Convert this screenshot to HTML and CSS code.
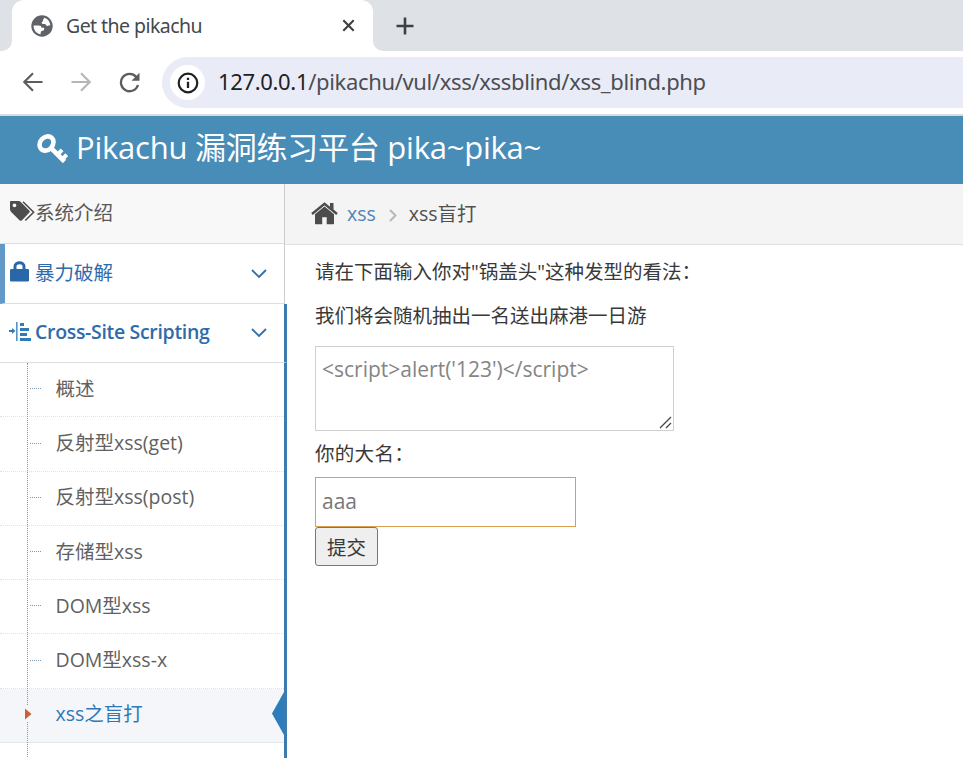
FILE: index.html
```html
<!DOCTYPE html>
<html lang="zh-CN">
<head>
<meta charset="utf-8">
<title>Get the pikachu</title>
<link rel="stylesheet" href="styles.css">
</head>
<body>
<div class="window">
  <div class="tabstrip">
    <div class="strip-left"></div>
    <div class="tab">
      <svg class="globe" width="22" height="22" viewBox="0 0 22 22"><circle cx="11" cy="11" r="10.700" fill="#5f6368"/><path d="M13.200 2.700c3.400.9 5.900 4 6.100 7.600-1.200-.2-2 .8-3.200.6-1.100-.2-1-1.500-2.100-1.800-1.200-.3-2.900.2-3.300-.9-.4-1.200 1.400-1.400 1.300-2.700-.1-1.200 1-1.500 1.200-2.800zM2.600 10.500h4.900c1.800 0 3 .9 3.100 2.300h2c.9.6.7 2-.1 2.600-.9.7-2.300.3-2.700 1.500l-.2 2.300C5.600 18.800 2.400 15 2.600 10.500z" fill="#fff"/></svg>
      <span class="tab-title">Get the pikachu</span>
      <svg class="close" width="13" height="13" viewBox="0 0 13 13"><path d="M1.300 1.300l10.400 10.400M11.700 1.300L1.300 11.700" stroke="#3c4043" stroke-width="2.100"/></svg>
    </div>
    <div class="strip-right">
      <svg width="18" height="18" viewBox="0 0 18 18"><path d="M9 .5v17M.5 9h17" stroke="#3c4043" stroke-width="2.600"/></svg>
    </div>
  </div>
  <div class="toolbar">
    <svg class="nav back" width="20" height="20" viewBox="0 0 20 20"><path d="M19.500 10H1.500M10 1.300L1.300 10l8.700 8.700" fill="none" stroke="#5a5d61" stroke-width="2.100"/></svg>
    <svg class="nav fwd" width="20" height="20" viewBox="0 0 20 20"><path d="M.5 10h18M10 1.300l8.700 8.700-8.700 8.700" fill="none" stroke="#b4b6b9" stroke-width="2.100"/></svg>
    <svg class="nav reload" width="21" height="21" viewBox="0 0 21 21"><path d="M17.300 4.900A8.700 8.700 0 1 0 19 13" fill="none" stroke="#5a5d61" stroke-width="2.300"/><path d="M20.500.8v8h-8z" fill="#5a5d61"/></svg>
    <div class="omnibox">
      <span class="info"><svg width="22" height="22" viewBox="0 0 22 22"><circle cx="11" cy="11" r="9.300" fill="none" stroke="#1f2023" stroke-width="2.200"/><path d="M11 9.700v6.200M11 5.700v2.300" stroke="#1f2023" stroke-width="2.300"/></svg></span>
      <span class="url"><b>127.0.0.1</b>/pikachu/vul/xss/xssblind/xss_blind.php</span>
    </div>
  </div>
  <header class="navbar">
    <svg class="key" width="31" height="30" viewBox="0 0 31 30"><g fill="none" stroke="#fff"><ellipse cx="9.500" cy="9.500" rx="6.300" ry="7.700" transform="rotate(42 9.500 9.500)" stroke-width="4.600"/><path d="M13.500 13.500l14 14" stroke-width="4.600"/><path d="M20.500 20.500l4.600-4.600M25 25.500l4.800-4.800" stroke-width="4"/></g></svg>
    <h1>Pikachu 漏洞练习平台 pika~pika~</h1>
  </header>
  <div class="body">
    <nav class="sidebar">
      <a class="row intro"><svg class="ic-tags" width="26" height="21" viewBox="0 0 26 21"><path fill="#4d4d4d" fill-rule="evenodd" d="M1 0h7.500c1 0 1.800.5 2.500 1.200l8.200 8.300c.8.800.8 1.500 0 2.300L12 19.200c-.8.800-1.700.8-2.500 0L1.200 11C.5 10.300 0 9.500 0 8.500V1c0-.6.400-1 1-1zm3.500 2.400a1.900 1.900 0 1 0 0 3.800 1.900 1.900 0 0 0 0-3.800z"/><path d="M13 .8l10.600 10.400-8.300 8.300" fill="none" stroke="#4d4d4d" stroke-width="1.600"/></svg><span>系统介绍</span></a>
      <a class="row brute"><svg class="ic-lock" width="19" height="21" viewBox="0 0 19 21"><path d="M5 10V5.500C5 .5 14 .5 14 5.500V10" fill="none" stroke="#2a67a9" stroke-width="3"/><rect y="8" width="19" height="12.500" rx="1.300" fill="#2a67a9"/></svg><span>暴力破解</span><svg class="chev" width="16" height="10" viewBox="0 0 16 10"><path d="M1 1l7 7 7-7" fill="none" stroke="#3270ad" stroke-width="1.900"/></svg></a>
      <a class="row cross"><svg class="ic-indent" width="23" height="20" viewBox="0 0 23 20"><g fill="#2d7bbb"><path d="M0 7.900h3V6l3.500 2.900L3 11.700V9.900H0zM7.200 0h1.300v19H7.200zM11 1h4v3h-4zM11 6h9v3h-9zM11 11h7v3h-7zM11 16h11v3H11z"/></g></svg><span>Cross-Site Scripting</span><svg class="chev" width="16" height="10" viewBox="0 0 16 10"><path d="M1 1l7 7 7-7" fill="none" stroke="#3270ad" stroke-width="1.900"/></svg></a>
      <ul class="submenu">
        <li><span>概述</span></li>
        <li><span>反射型xss(get)</span></li>
        <li><span>反射型xss(post)</span></li>
        <li><span>存储型xss</span></li>
        <li><span>DOM型xss</span></li>
        <li><span>DOM型xss-x</span></li>
        <li class="active"><span>xss之盲打</span>
          <svg class="caret" width="9" height="16" viewBox="0 0 9 16"><path fill="#f4f6fa" d="M0 0h9v16H0z"/><path d="M1 2.500L7.500 8 1 13.500z" fill="#c86139"/></svg>
          <svg class="notch" width="12" height="43" viewBox="0 0 12 43"><path d="M12 0v43L0 21.500z" fill="#2b7dbc"/></svg>
        </li>
        <li class="next"></li>
      </ul>
    </nav>
    <main>
      <div class="crumbs">
        <svg class="home" width="27" height="23" viewBox="0 0 27 23"><path d="M1 12L13.500 1.700 26 12" fill="none" stroke="#4c4c4c" stroke-width="2.400"/><path d="M19 1h3.500v7L19 5zM4 12.300l9.500-7.800 9.500 7.800v9c0 .600-.4 1-1 1h-6.300v-7h-4.500v7H5c-.6 0-1-.4-1-1z" fill="#4c4c4c"/></svg>
        <a>xss</a>
        <svg class="sep" width="8" height="13" viewBox="0 0 8 13"><path d="M1 1l5.500 5.500L1 12" fill="none" stroke="#b2b6bf" stroke-width="1.900"/></svg>
        <span class="current">xss盲打</span>
      </div>
      <div class="content">
        <p class="q1">请在下面输入你对"锅盖头"这种发型的看法：</p>
        <p class="q2">我们将会随机抽出一名送出麻港一日游</p>
        <div class="textarea"><span>&lt;script&gt;alert('123')&lt;/script&gt;</span><svg class="grip" width="13" height="13" viewBox="0 0 13 13"><path d="M1 12L12 1M7 12l5-5" stroke="#444" stroke-width="1.300"/></svg></div>
        <p class="label">你的大名：</p>
        <input type="text" value="aaa">
        <button>提交</button>
      </div>
    </main>
  </div>
</div>
</body>
</html>
```
FILE: styles.css
```css
* { box-sizing: border-box; }
body { margin: 0; background: #fff; font-family: "Open Sans", "Noto Sans CJK SC", sans-serif; color: #393939; }
.window { width: 963px; height: 758px; overflow: hidden; display: flex; flex-direction: column; }
svg { display: block; flex: none; }
h1, p, ul { margin: 0; padding: 0; font-weight: 400; }

.tabstrip { height: 51px; display: flex; position: relative; z-index: 0; }
.strip-left { width: 12px; background: #dee1e6; border-bottom-right-radius: 10px; }
.tab { width: 361px; display: flex; align-items: center; padding: 1px 18px 0 19px; border-radius: 12px 12px 0 0; background: #fff; position: relative; }
.tab::before { content: ""; position: absolute; z-index: -1; left: 0; top: 0; width: 361px; height: 20px; background: #dee1e6; }
.tab-title { font: 19.500px/28px "Noto Sans", sans-serif; color: #45484c; margin-left: 13px; letter-spacing: -.55px; white-space: nowrap; }
.close { margin-left: auto; margin-top: -1px; }
.strip-right { flex: 1; background: #dee1e6; border-bottom-left-radius: 10px; padding: 17px 0 0 23px; }

.toolbar { height: 65px; border-bottom: 2px solid #d9dbe3; display: flex; align-items: center; padding-left: 23px; }
.nav { margin-top: -1px; }
.fwd { margin-left: 28px; }
.reload { margin-left: 28px; }
.omnibox { margin-left: 22px; flex: 1; height: 51px; background: #e9ecf6; border-radius: 26px 0 0 26px; display: flex; align-items: center; padding-left: 8px; }
.info { width: 35px; height: 35px; border-radius: 50%; background: #fff; display: grid; place-items: center; flex: none; }
.url { margin-left: 13px; margin-top: -3px; font: 22px/30px "Noto Sans", sans-serif; color: #4b4e54; letter-spacing: -.34px; white-space: nowrap; }
.url b { font-weight: 400; color: #202124; }

.navbar { height: 68px; background: #488cb8; color: #fff; display: flex; align-items: center; padding: 0 0 6px 37px; }
.key { margin-top: 4px; }
.navbar h1 { margin-left: 8px; font-size: 31px; line-height: 44px; letter-spacing: -.24px; white-space: nowrap; }

.body { flex: 1; min-height: 0; display: flex; }
.sidebar { width: 285px; flex: none; }
.row { display: flex; align-items: center; height: 60px; border-bottom: 1px solid #dadfe3; border-right: 1px solid #c9cbcd; font-size: 19.500px; line-height: 30px; color: #2f6bab; white-space: nowrap; padding: 0 17px 2px 0; }
.intro { background: #f8f8f8; color: #585858; padding-left: 10px; }
.intro span { margin-left: -1px; }
.ic-tags { margin-top: -2px; }
.brute { border-left: 5px solid #6399c8; padding-left: 5px; }
.ic-lock { margin-top: -3px; }
.brute span { margin-left: 6px; }
.cross { height: 59px; padding: 0 17px 2px 9px; font-weight: 600; letter-spacing: -.32px; }
.cross span { margin-left: 3px; }
.chev { margin-left: auto; margin-top: 2px; }
.sidebar .cross, .submenu { width: 287px; border-right: 3px solid #3b7bb0; }
.submenu { list-style: none; position: relative; }
.submenu::before { content: ""; position: absolute; z-index: 1; left: 27px; top: 0; height: 400px; border-left: 1px dotted #8197aa; }
.submenu li { position: relative; height: 54.250px; border-bottom: 1px dotted #dce2e8; padding: 0 0 1.500px 30px; display: flex; align-items: center; font-size: 19.500px; line-height: 30px; color: #616161; white-space: nowrap; }
.submenu li::before { content: ""; width: 11px; border-top: 1px dotted #8197aa; margin-right: 14.500px; }
.submenu .active { background: #f4f6fa; color: #2f78b7; border-bottom-style: solid; border-color: #e2e6ee; }
.submenu .active::before { border-color: transparent; }
.submenu .next { border: 0; }
.caret { position: absolute; z-index: 2; left: 24px; top: 17px; }
.notch { position: absolute; right: 0; top: 3px; }
.submenu .next::before { display: none; }

main { flex: 1; min-width: 0; }
.crumbs { height: 61px; background: #f4f4f4; border-bottom: 1px solid #e0e0e0; display: flex; align-items: center; padding: 0 0 1px 26px; font-size: 19.500px; line-height: 30px; white-space: nowrap; }
.crumbs a { margin-left: 9px; color: #4c85b7; }
.sep { margin-left: 13px; margin-top: 3px; }
.current { margin-left: 12px; color: #505050; }
.content { padding: 12px 0 0 30px; font-size: 19.500px; line-height: 30px; display: flex; flex-direction: column; align-items: flex-start; }
.content p { white-space: nowrap; }
.q2 { margin-top: 14px; }
.textarea { position: relative; margin-top: 15px; width: 359px; height: 85px; border: 1px solid #d0d0d0; padding: 7px 6px; font-size: 21px; color: #858585; }
.grip { position: absolute; right: 1px; bottom: 1px; }
.label { margin-top: 8px; letter-spacing: .3px; }
input { appearance: none; margin: 8px 0 0; width: 261px; height: 50px; border: 1px solid #dba04e; border-radius: 0; padding: 0 6px 2px; font: 21px "Open Sans", sans-serif; color: #777; outline: none; }
button { width: 63px; height: 39px; border: 1px solid #767676; border-radius: 3px; background: #efefef; padding: 0; font: 19.500px "Open Sans", "Noto Sans CJK SC", sans-serif; color: #393939; }
```
